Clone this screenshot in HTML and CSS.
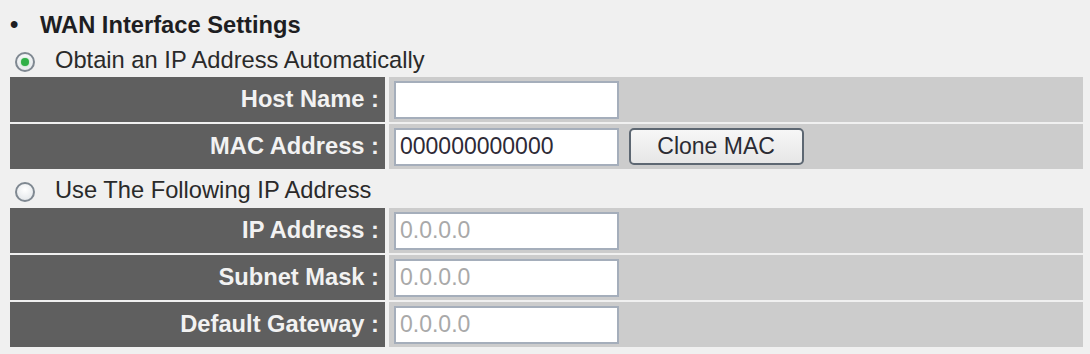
FILE: index.html
```html
<!DOCTYPE html>
<html lang="en">
<head>
<meta charset="UTF-8">
<title>WAN Interface Settings</title>
<link rel="stylesheet" href="styles.css">
</head>
<body>
<div class="wan">
  <div class="title"><span class="bullet">&bull;</span>WAN Interface Settings</div>

  <div class="mode mode-first">
    <span class="radio checked"></span>
    Obtain an IP Address Automatically
  </div>

  <table class="settings">
    <tr>
      <td class="label">Host Name :</td>
      <td class="value"><input type="text" class="field"></td>
    </tr>
    <tr>
      <td class="label">MAC Address :</td>
      <td class="value">
        <input type="text" class="field" value="000000000000">
        <button class="btn">Clone MAC</button>
      </td>
    </tr>
  </table>

  <div class="mode mode-second">
    <span class="radio"></span>
    Use The Following IP Address
  </div>

  <table class="settings settings-static">
    <tr>
      <td class="label">IP Address :</td>
      <td class="value"><input type="text" class="field" value="0.0.0.0" disabled></td>
    </tr>
    <tr>
      <td class="label">Subnet Mask :</td>
      <td class="value"><input type="text" class="field" value="0.0.0.0" disabled></td>
    </tr>
    <tr>
      <td class="label">Default Gateway :</td>
      <td class="value"><input type="text" class="field" value="0.0.0.0" disabled></td>
    </tr>
  </table>
</div>
</body>
</html>
```

FILE: styles.css
```css
:root {
  --page-bg: #f0f0f0;
  --label-bg: #5f5f5f;
  --label-text: #f2f2f2;
  --value-bg: #cccccc;
  --text: #2a2a2a;
  --field-border: #a5aebb;
}

* {
  margin: 0;
  padding: 0;
  box-sizing: border-box;
}

body {
  font-family: "Liberation Sans", Arial, sans-serif;
  font-size: 23.7px;
  color: var(--text);
  background: var(--page-bg);
  padding-top: 12px;
}

.wan {
  width: 1081px;
  margin-left: 6px;
}

.title {
  font-weight: bold;
  line-height: 26px;
  height: 26px;
  color: #1e1e22;
}

.bullet {
  display: inline-block;
  width: 34px;
  padding-left: 4px;
}

.mode {
  display: flex;
  align-items: center;
  height: 26px;
  line-height: 26px;
  padding-left: 9px;
}

.mode-first {
  margin-top: 9px;
  margin-bottom: 2px;
}

.mode-second {
  margin-top: 6px;
  margin-bottom: 3px;
}

.radio {
  display: inline-block;
  width: 20px;
  height: 20px;
  border-radius: 50%;
  border: 2px solid #7f8891;
  background: radial-gradient(circle at 50% 35%, #ffffff 0%, #dfe3e7 100%);
  margin-right: 20px;
  margin-top: 3px;
  position: relative;
  flex: none;
}

.radio.checked::after {
  content: "";
  position: absolute;
  left: 4px;
  top: 4px;
  width: 8px;
  height: 8px;
  border-radius: 50%;
  background: #30b048;
  box-shadow: 0 0 2px #7fd08c;
}

.settings {
  width: 100%;
  border-collapse: separate;
  border-spacing: 4px 2px;
}

.settings td {
  height: 45px;
}

.label {
  width: 375px;
  background: var(--label-bg);
  color: var(--label-text);
  font-weight: bold;
  text-align: right;
  padding-right: 6px;
}

.value {
  background: var(--value-bg);
  padding-left: 5px;
}

.field {
  width: 225px;
  height: 38px;
  border: 2px solid var(--field-border);
  background: #ffffff;
  font-family: inherit;
  font-size: 23px;
  color: #2e2a36;
  padding: 0 4px;
  vertical-align: middle;
}

.field:disabled {
  color: #a9a9a9;
  background: #ffffff;
}

.btn {
  width: 175px;
  height: 37px;
  margin-left: 3px;
  border: 2px solid #5d6772;
  border-radius: 5px;
  background: linear-gradient(#f7f7f7, #e6e6e6);
  font-family: inherit;
  font-size: 23px;
  color: #2b2b33;
  vertical-align: middle;
}
```
